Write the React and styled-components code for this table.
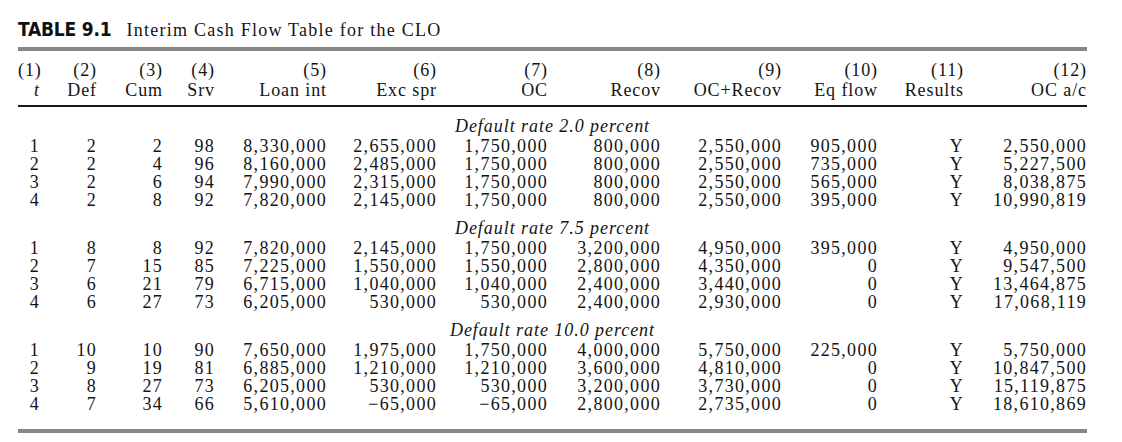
import React from 'react';
import styled, { createGlobalStyle } from 'styled-components';

const GlobalStyle = createGlobalStyle`
  body {
    margin: 0;
    background: #ffffff;
    color: #141414;
    font-family: "Liberation Serif", "Times New Roman", serif;
  }
`;

// right edges of columns sit at 40, 97, 163, 215, 327, 437, 548, 661, 782, 878, 964, 1087
const COLS = '22px 57px 66px 52px 112px 110px 111px 113px 121px 96px 86px 123px';

const Page = styled.div`
  width: 1069px;
  padding: 18px 0 0 18px;
`;

const Caption = styled.div`
  display: flex;
  align-items: baseline;
  gap: 15px;
  height: 22px;
  line-height: 22px;
`;

const TableNo = styled.span`
  font-family: "Liberation Sans Narrow", "DejaVu Sans Condensed", "Liberation Sans", sans-serif;
  font-weight: 700;
  font-size: 19px;
  letter-spacing: -0.2px;
  color: #111;
`;

const CaptionText = styled.span`
  font-size: 18px;
  letter-spacing: 1.25px;
`;

const Rule = styled.div`
  height: ${p => p.$thick ? '4px' : '2px'};
  background: ${p => p.$thick ? '#878787' : '#1a1a1a'};
  margin-top: ${p => p.$top || 0}px;
`;

const Head = styled.div`
  padding: 9px 0 5px;
`;

const Row = styled.div`
  display: grid;
  grid-template-columns: ${COLS};
  height: ${p => p.$h || 18}px;
  line-height: ${p => p.$h || 18}px;
  font-size: 18px;
  letter-spacing: ${p => p.$head ? '0.9px' : '1.3px'};
`;

const Cell = styled.div`
  text-align: right;
  white-space: nowrap;
  font-style: ${p => p.$italic ? 'italic' : 'normal'};
`;

const GroupLabel = styled.div`
  padding: 10px 0 2px;
  text-align: center;
  font-style: italic;
  font-size: 18px;
  line-height: 18px;
  letter-spacing: 0.95px;
`;

const heads = [
  ['(1)', 't'], ['(2)', 'Def'], ['(3)', 'Cum'], ['(4)', 'Srv'], ['(5)', 'Loan int'],
  ['(6)', 'Exc spr'], ['(7)', 'OC'], ['(8)', 'Recov'], ['(9)', 'OC+Recov'],
  ['(10)', 'Eq flow'], ['(11)', 'Results'], ['(12)', 'OC a/c'],
];

const groups = [
  {
    label: 'Default rate 2.0 percent',
    rows: [
      ['1', '2', '2', '98', '8,330,000', '2,655,000', '1,750,000', '800,000', '2,550,000', '905,000', 'Y', '2,550,000'],
      ['2', '2', '4', '96', '8,160,000', '2,485,000', '1,750,000', '800,000', '2,550,000', '735,000', 'Y', '5,227,500'],
      ['3', '2', '6', '94', '7,990,000', '2,315,000', '1,750,000', '800,000', '2,550,000', '565,000', 'Y', '8,038,875'],
      ['4', '2', '8', '92', '7,820,000', '2,145,000', '1,750,000', '800,000', '2,550,000', '395,000', 'Y', '10,990,819'],
    ],
  },
  {
    label: 'Default rate 7.5 percent',
    rows: [
      ['1', '8', '8', '92', '7,820,000', '2,145,000', '1,750,000', '3,200,000', '4,950,000', '395,000', 'Y', '4,950,000'],
      ['2', '7', '15', '85', '7,225,000', '1,550,000', '1,550,000', '2,800,000', '4,350,000', '0', 'Y', '9,547,500'],
      ['3', '6', '21', '79', '6,715,000', '1,040,000', '1,040,000', '2,400,000', '3,440,000', '0', 'Y', '13,464,875'],
      ['4', '6', '27', '73', '6,205,000', '530,000', '530,000', '2,400,000', '2,930,000', '0', 'Y', '17,068,119'],
    ],
  },
  {
    label: 'Default rate 10.0 percent',
    rows: [
      ['1', '10', '10', '90', '7,650,000', '1,975,000', '1,750,000', '4,000,000', '5,750,000', '225,000', 'Y', '5,750,000'],
      ['2', '9', '19', '81', '6,885,000', '1,210,000', '1,210,000', '3,600,000', '4,810,000', '0', 'Y', '10,847,500'],
      ['3', '8', '27', '73', '6,205,000', '530,000', '530,000', '3,200,000', '3,730,000', '0', 'Y', '15,119,875'],
      ['4', '7', '34', '66', '5,610,000', '\u221265,000', '\u221265,000', '2,800,000', '2,735,000', '0', 'Y', '18,610,869'],
    ],
  },
];

export default function App() {
  return (
    <>
      <GlobalStyle />
      <Page>
        <Caption>
          <TableNo>TABLE 9.1</TableNo>
          <CaptionText>Interim Cash Flow Table for the CLO</CaptionText>
        </Caption>
        <Rule $thick $top={7} />
        <Head>
          <Row $head $h={20}>
            {heads.map(h => <Cell key={h[0]}>{h[0]}</Cell>)}
          </Row>
          <Row $head $h={20}>
            {heads.map(h => <Cell key={h[0]} $italic={h[1] === 't'}>{h[1]}</Cell>)}
          </Row>
        </Head>
        <Rule />
        {groups.map(g => (
          <div key={g.label}>
            <GroupLabel>{g.label}</GroupLabel>
            {g.rows.map((r, i) => (
              <Row key={i}>
                {r.map((v, j) => <Cell key={j}>{v}</Cell>)}
              </Row>
            ))}
          </div>
        ))}
        <Rule $thick $top={16} />
      </Page>
    </>
  );
}
